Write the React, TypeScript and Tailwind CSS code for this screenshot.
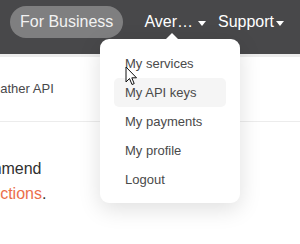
import React from "react";

const Caret = ({ ml }: { ml: string }) => (
  <svg width="8" height="5" viewBox="0 0 8 5" className={ml + " mt-[3px]"}>
    <path d="M0 0 L8 0 L4 5 Z" fill="#ffffff" />
  </svg>
);

export default function App() {
  const items = ["My services", "My API keys", "My payments", "My profile", "Logout"];
  return (
    <div
      className="relative w-[300px] h-[244px] overflow-hidden bg-white"
      style={{ fontFamily: '"Liberation Sans", Arial, sans-serif' }}
    >
      <header className="h-[54px] bg-[#48484a] flex items-start pt-[6px] pl-[10px]">
        <div className="h-[32px] px-[10px] rounded-full bg-[#7f7f80] text-[#f2f2f2] text-[16px] flex items-center">
          For Business
        </div>
        <div className="ml-[21px] h-[32px] flex items-center text-white text-[16px]">
          Aver…
          <Caret ml="ml-[5px]" />
        </div>
        <div className="ml-[12px] h-[32px] flex items-center text-white text-[16px]">
          Support
          <Caret ml="ml-[2px]" />
        </div>
      </header>
      <div className="h-[3px] bg-[#ececec]" />
      <div className="h-[64px] flex items-center text-[13px] text-[#48484a] whitespace-nowrap">
        <span className="ml-[-19px]">Weather API</span>
      </div>
      <div className="h-px bg-[#ececec]" />
      <div className="pt-[34px] text-[16px] leading-[25px] text-[#303030] whitespace-nowrap">
        <div className="ml-[-43px]">recommend</div>
        <div className="ml-[-39px]">
          <span className="text-[#eb6e4b]">instructions</span>.
        </div>
      </div>

      <div className="absolute left-[100px] top-[39px] w-[140px] bg-white rounded-[9px] shadow-[0_6px_22px_rgba(0,0,0,0.13)] pt-[10px] pb-[9px] px-[14px]">
        <svg
          width="14"
          height="7"
          viewBox="0 0 14 7"
          className="absolute left-[65px] top-[-6px]"
        >
          <path d="M0 7 L7 0 L14 7 Z" fill="#ffffff" />
        </svg>
        {items.map((t, i) => (
          <div
            key={t}
            className={
              "h-[29px] flex items-center pl-[11px] text-[13px] text-[#4a4a4a] rounded-[5px] " +
              (i === 1 ? "bg-[#f5f5f5]" : "")
            }
          >
            {t}
          </div>
        ))}
      </div>

      <svg
        width="13"
        height="20"
        viewBox="0 0 13 20"
        className="absolute left-[125px] top-[66px]"
      >
        <path
          d="M1 1 L1 16 L4.5 12.5 L7 18.5 L9.2 17.6 L6.8 11.8 L11.5 11.8 Z"
          fill="#ffffff"
          stroke="#111"
          strokeWidth="1"
          strokeLinejoin="round"
        />
      </svg>
    </div>
  );
}
